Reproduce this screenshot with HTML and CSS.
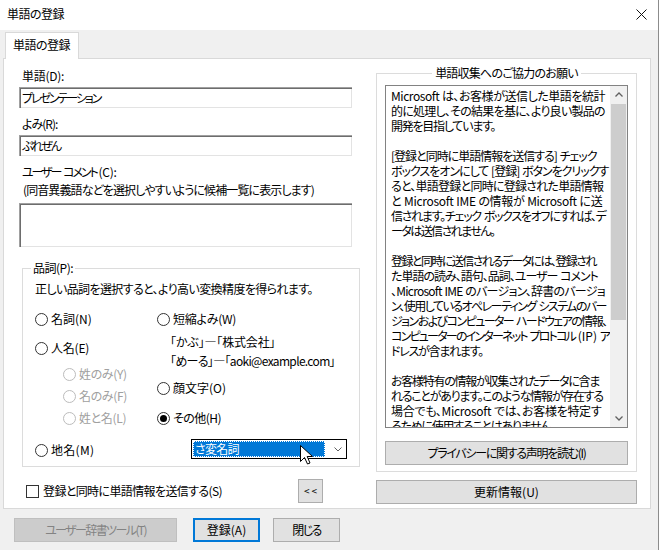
FILE: index.html
```html
<!DOCTYPE html>
<html>
	<head>
		<meta charset="UTF-8">
		<title>単語の登録</title>
		<link rel="stylesheet" href="styles.css">
	</head>
	<body>
		<div class="window">
			<div class="titlebar">
				<span class="title">単語の登録</span>
				<svg class="close" width="11" height="11" viewBox="0 0 11 11"><path d="M0.5 0.5L10.5 10.5M10.5 0.5L0.5 10.5" stroke="#111" stroke-width="1"/></svg>
			</div>
			<div class="tabs"><div class="tab">単語の登録</div></div>
			<div class="page">
				<div class="col-left">
					<div class="label l-word">単語(D):</div>
					<div class="edit"><span class="v-word">プレゼンテーション</span></div>
					<div class="label gap l-yomi">よみ(R):</div>
					<div class="edit"><span class="v-yomi">ぷれぜん</span></div>
					<div class="label gap"><span class="l-comment">ユーザー コメント</span><span class="l-key">(C):</span></div>
					<div class="label note">(同音異義語などを選択しやすいように候補一覧に表示します)</div>
					<div class="edit memo"></div>

					<fieldset class="group pos">
						<legend>品詞(P):</legend>
						<div class="hint">正しい品詞を選択すると、より高い変換精度を得られます。</div>
						<div class="radios">
							<div class="rcol first">
								<div class="opt"><i class="rb"></i>名詞(N)</div>
								<div class="opt r-person"><i class="rb"></i>人名(E)</div>
								<div class="opt off sub r-sei"><i class="rb"></i>姓のみ(Y)</div>
								<div class="opt off sub r-mei"><i class="rb"></i>名のみ(F)</div>
								<div class="opt off sub r-full"><i class="rb"></i>姓と名(L)</div>
								<div class="opt r-place"><i class="rb"></i>地名(M)</div>
							</div>
							<div class="rcol">
								<div class="opt r-short"><i class="rb"></i>短縮よみ(W)</div>
								<div class="sample s1">「かぶ」―「株式会社」</div>
								<div class="sample s2">「めーる」―「aoki@example.com」</div>
								<div class="opt r-face"><i class="rb"></i>顔文字(O)</div>
								<div class="opt r-other"><i class="rb on"></i>その他(H)</div>
								<div class="combo">
									<span class="sel">さ変名詞</span>
									<svg class="drop" width="8" height="5" viewBox="0 0 8 5"><path d="M0.5 0.5L4 4L7.5 0.5" fill="none" stroke="#606060" stroke-width="1"/></svg>
									<svg class="cursor" width="13" height="20" viewBox="0 0 13 20"><path d="M0.5 0.5L0.5 16.5L4.5 12.5L7.5 19L10 18L7.2 11.5L12.5 11.5Z" fill="#fff" stroke="#000" stroke-width="1"/></svg>
								</div>
							</div>
						</div>
					</fieldset>

					<div class="send">
						<i class="cb"></i>
						<span class="send-label">登録と同時に単語情報を送信する(S)</span>
						<div class="btn small">&lt;&lt;</div>
					</div>
				</div>

				<div class="col-right">
					<div class="group-head"><span>単語収集へのご協力のお願い</span></div>
					<div class="info">
						<div class="textbox">
							<div class="text">
								<div class="t2">Microsoft は、お客様が送信した単語を統計</div>
								<div class="t3">的に処理し、その結果を基に、より良い製品の</div>
								<div class="t5">開発を目指しています。</div>
								<div class="blank"></div>
								<div class="t4">[登録と同時に単語情報を送信する] チェック</div>
								<div class="t4">ボックスをオンにして [登録] ボタンをクリックす</div>
								<div class="t3">ると、単語登録と同時に登録された単語情報</div>
								<div class="t1">と Microsoft IME の情報が Microsoft に送</div>
								<div class="t5">信されます。チェック ボックスをオフにすれば、デ</div>
								<div class="t6">ータは送信されません。</div>
								<div class="blank"></div>
								<div class="t6">登録と同時に送信されるデータには、登録され</div>
								<div class="t4">た単語の読み、語句、品詞、ユーザー コメント</div>
								<div class="t3">、Microsoft IME のバージョン、辞書のバージョ</div>
								<div class="t6">ン、使用しているオペレーティング システムのバー</div>
								<div class="t6">ジョンおよびコンピューター ハードウェアの情報、</div>
								<div class="t7">コンピューターのインターネット プロトコル <span class="plain">(IP)</span> ア</div>
								<div class="t5">ドレスが含まれます。</div>
								<div class="blank"></div>
								<div class="t5">お客様特有の情報が収集されたデータに含ま</div>
								<div class="t5">れることがあります。このような情報が存在する</div>
								<div class="t1">場合でも、Microsoft では、お客様を特定す</div>
								<div class="t5">るために使用することはありません。</div>
							</div>
							<div class="vscroll">
								<div class="sb-btn"><svg width="8" height="5" viewBox="0 0 8 5"><path d="M0.5 4.5L4 1L7.5 4.5" fill="none" stroke="#606060" stroke-width="1.3"/></svg></div>
								<div class="thumb"></div>
								<div class="track"></div>
								<div class="sb-btn"><svg width="8" height="5" viewBox="0 0 8 5"><path d="M0.5 0.5L4 4L7.5 0.5" fill="none" stroke="#606060" stroke-width="1.3"/></svg></div>
							</div>
						</div>
						<div class="btn privacy">プライバシーに関する声明を読む(I)</div>
					</div>
					<div class="btn update">更新情報(U)</div>
				</div>
			</div>

			<div class="footer">
				<div class="btn disabled tool">ユーザー辞書ツール(T)</div>
				<div class="btn default ok">登録(A)</div>
				<div class="btn close-btn">閉じる</div>
			</div>
		</div>
	</body>
</html>
```

FILE: styles.css
```css
body,fieldset,legend{
	margin: 0;
	padding: 0;
}
body{
	font-family: "Noto Sans CJK JP", "Noto Sans", sans-serif;
	font-size: 12px;
	line-height: 16px;
	font-feature-settings: "palt";
	color: #000;
	background: #f0f0f0;
}
.window{
	width: 658px;
	height: 550px;
	border-right: 1px solid #8c8c8c;
	background: #f0f0f0;
	overflow: hidden;
}
.titlebar{
	height: 30px;
	background: #fff;
	display: flex;
	align-items: center;
	justify-content: space-between;
	padding: 0 11px 2px 7px;
	box-sizing: border-box;
}
.title,.tab{
	letter-spacing: -0.5px;
}
.tabs{
	display: flex;
	height: 28px;
	padding: 2px 0 0 5px;
	box-sizing: border-box;
}
.tab{
	position: relative;
	z-index: 1;
	height: 27px;
	background: #fff;
	border: 1px solid #d9d9d9;
	border-bottom: none;
	padding: 0 8px 0 7px;
	line-height: 24px;
	box-sizing: border-box;
}
.page{
	margin-left: 3px;
	width: 648px;
	height: 451px;
	border: 1px solid #d9d9d9;
	background: #fff;
	box-sizing: border-box;
	display: flex;
	align-items: flex-start;
	padding-left: 15px;
}

/* left side */
.col-left{
	width: 336px;
	padding-top: 9px;
}
.label{
	padding-left: 3px;
	height: 16px;
	white-space: nowrap;
}
.label.gap{
	margin-top: 8px;
}
.label.note{
	margin-top: 2px;
	padding-left: 4px;
	letter-spacing: -0.9px;
}
.l-word{ letter-spacing: -0.25px; }
.l-yomi{ letter-spacing: -1px; }
.l-comment{ letter-spacing: -2.1px; word-spacing: 2.4px; }
.l-key{ letter-spacing: -0.3px; margin-left: 2px; }
.v-word{ letter-spacing: -2.1px; }
.v-yomi{ letter-spacing: -2.2px; }
.edit{
	margin-top: 3px;
	width: 333px;
	height: 21px;
	box-sizing: border-box;
	border-top: 1px solid #a0a0a0;
	border-left: 1px solid #a0a0a0;
	box-shadow: inset 1px 1px 0 #6d6d6d, inset -1px -1px 0 #e3e3e3;
	padding: 2px 0 0 2px;
	white-space: nowrap;
}
.edit.memo{
	margin-top: 5px;
	height: 44px;
}
.group{
	border: 1px solid #dcdcdc;
	box-sizing: border-box;
}
.group legend{
	padding: 0 2px;
	line-height: 16px;
	letter-spacing: -0.5px;
}
.pos{
	margin: 13px 0 0 3px;
	width: 333px;
	padding: 0 12px 7px 12px;
}
.pos legend{
	margin-left: -4px;
}
.hint{
	margin-top: 5px;
	letter-spacing: -0.6px;
	white-space: nowrap;
}
.radios{
	display: flex;
	margin-top: 14px;
}
.rcol{
	display: flex;
	flex-direction: column;
}
.rcol.first{
	width: 122px;
}
.opt{
	display: flex;
	align-items: center;
	height: 16px;
	white-space: nowrap;
}
.rb{
	width: 13px;
	height: 13px;
	border: 1px solid #333;
	border-radius: 50%;
	box-sizing: border-box;
	background: #fff;
	margin-right: 3px;
}
.rb.on:after{
	display: block;
	content: "";
	width: 7px;
	height: 7px;
	margin: 2px;
	border-radius: 50%;
	background: #000;
}
.opt.off{
	color: #a0a0a0;
	letter-spacing: -0.35px;
}
.opt.off .rb{
	border-color: #bcbcbc;
}
.opt.sub{
	margin-left: 28px;
}
.r-person{ margin-top: 13px; letter-spacing: -0.2px; }
.r-sei{ margin-top: 10px; }
.r-mei{ margin-top: 6px; }
.r-full{ margin-top: 6px; }
.r-place{ margin-top: 16px; letter-spacing: 0.3px; }
.r-short{ letter-spacing: -0.25px; }

.sample{
	height: 16px;
	margin-left: 13px;
	white-space: nowrap;
}
.s1{ margin-top: 7px; letter-spacing: -0.15px; }
.s2{ margin-top: 3px; letter-spacing: -0.67px; }
.r-face{ margin-top: 11px; }
.r-other{ margin-top: 14px; letter-spacing: -0.55px; }
.combo{
	position: relative;
	margin: 13px 0 0 34px;
	width: 156px;
	height: 20px;
	border: 1px solid #000;
	box-sizing: border-box;
	background: #fff;
	display: flex;
	align-items: center;
}
.combo .sel{
	margin-left: 1px;
	width: 132px;
	height: 16px;
	box-sizing: border-box;
	background: #0078d7;
	color: #fff;
	border: 1px dotted #fff;
	line-height: 14px;
	padding-left: 1px;
	letter-spacing: -0.7px;
}
.combo .drop{
	margin-left: 9px;
}
.combo .cursor{
	position: absolute;
	left: 108px;
	top: 5px;
}
.send{
	display: flex;
	align-items: center;
	height: 24px;
	margin-top: 12px;
}
.cb{
	width: 13px;
	height: 13px;
	border: 1px solid #333;
	background: #fff;
	box-sizing: border-box;
	margin-left: 7px;
}
.send-label{
	margin-left: 4px;
	letter-spacing: -0.62px;
}

/* buttons */
.btn{
	height: 24px;
	border: 1px solid #adadad;
	background: #e1e1e1;
	box-sizing: border-box;
	display: flex;
	align-items: center;
	justify-content: center;
	white-space: nowrap;
}
.btn.small{
	width: 25px;
	margin-left: auto;
	margin-right: 32px;
	font-size: 10px;
	letter-spacing: 2px;
	padding-left: 2px;
}
.btn.disabled{
	background: #cccccc;
	border-color: #bfbfbf;
	color: #838383;
}
.btn.default{
	border-color: #0078d7;
	box-shadow: inset 0 0 0 1px #0078d7;
}

/* right side */
.col-right{
	width: 262px;
	margin-left: 21px;
	padding-top: 6px;
}
.group-head{
	width: 261px;
	display: flex;
	height: 16px;
	line-height: 16px;
	letter-spacing: -0.77px;
}
.group-head:before,.group-head:after{
	content: "";
	flex: 1;
	height: 7px;
	margin-top: 8px;
	border-top: 1px solid #dcdcdc;
}
.group-head:before{
	border-left: 1px solid #dcdcdc;
	margin-right: 3px;
}
.group-head:after{
	border-right: 1px solid #dcdcdc;
	margin-left: 3px;
}
.info{
	width: 261px;
	border: 1px solid #dcdcdc;
	border-top: none;
	box-sizing: border-box;
	padding: 4px 8px 6px 8px;
}
.textbox{
	height: 343px;
	border: 1px solid #828282;
	box-sizing: border-box;
	display: flex;
}
.text{
	flex: 1;
	padding: 2px 0 0 5px;
	line-height: 15px;
	white-space: nowrap;
	overflow: hidden;
}
.text div{
	height: 15px;
}
.t1{ letter-spacing: -0.3px; word-spacing: 0.3px; }
.t2{ letter-spacing: -0.45px; word-spacing: 0.45px; }
.t3{ letter-spacing: -0.75px; word-spacing: 0.75px; }
.t4{ letter-spacing: -1px; word-spacing: 1px; }
.t5{ letter-spacing: -1.25px; word-spacing: 1.25px; }
.t6{ letter-spacing: -1.55px; word-spacing: 1.55px; }
.t7{ letter-spacing: -1.8px; word-spacing: 1.8px; }
.t7 .plain{ letter-spacing: 0; }
.vscroll{
	width: 17px;
	background: #f0f0f0;
	display: flex;
	flex-direction: column;
}
.sb-btn{
	height: 17px;
	display: flex;
	align-items: center;
	justify-content: center;
}
.thumb{
	margin: 1px 1px 0 1px;
	height: 216px;
	background: #cdcdcd;
}
.track{
	flex: 1;
}
.privacy{
	margin-top: 13px;
	letter-spacing: -1.3px;
}
.update{
	margin-top: 8px;
	width: 261px;
}

/* bottom buttons */
.footer{
	display: flex;
	padding: 9px 0 0 14px;
}
.tool{
	width: 163px;
	letter-spacing: -1.6px;
}
.ok{
	width: 67px;
	margin-left: 16px;
}
.close-btn{
	width: 67px;
	margin-left: 13px;
	letter-spacing: -1.6px;
}
```
